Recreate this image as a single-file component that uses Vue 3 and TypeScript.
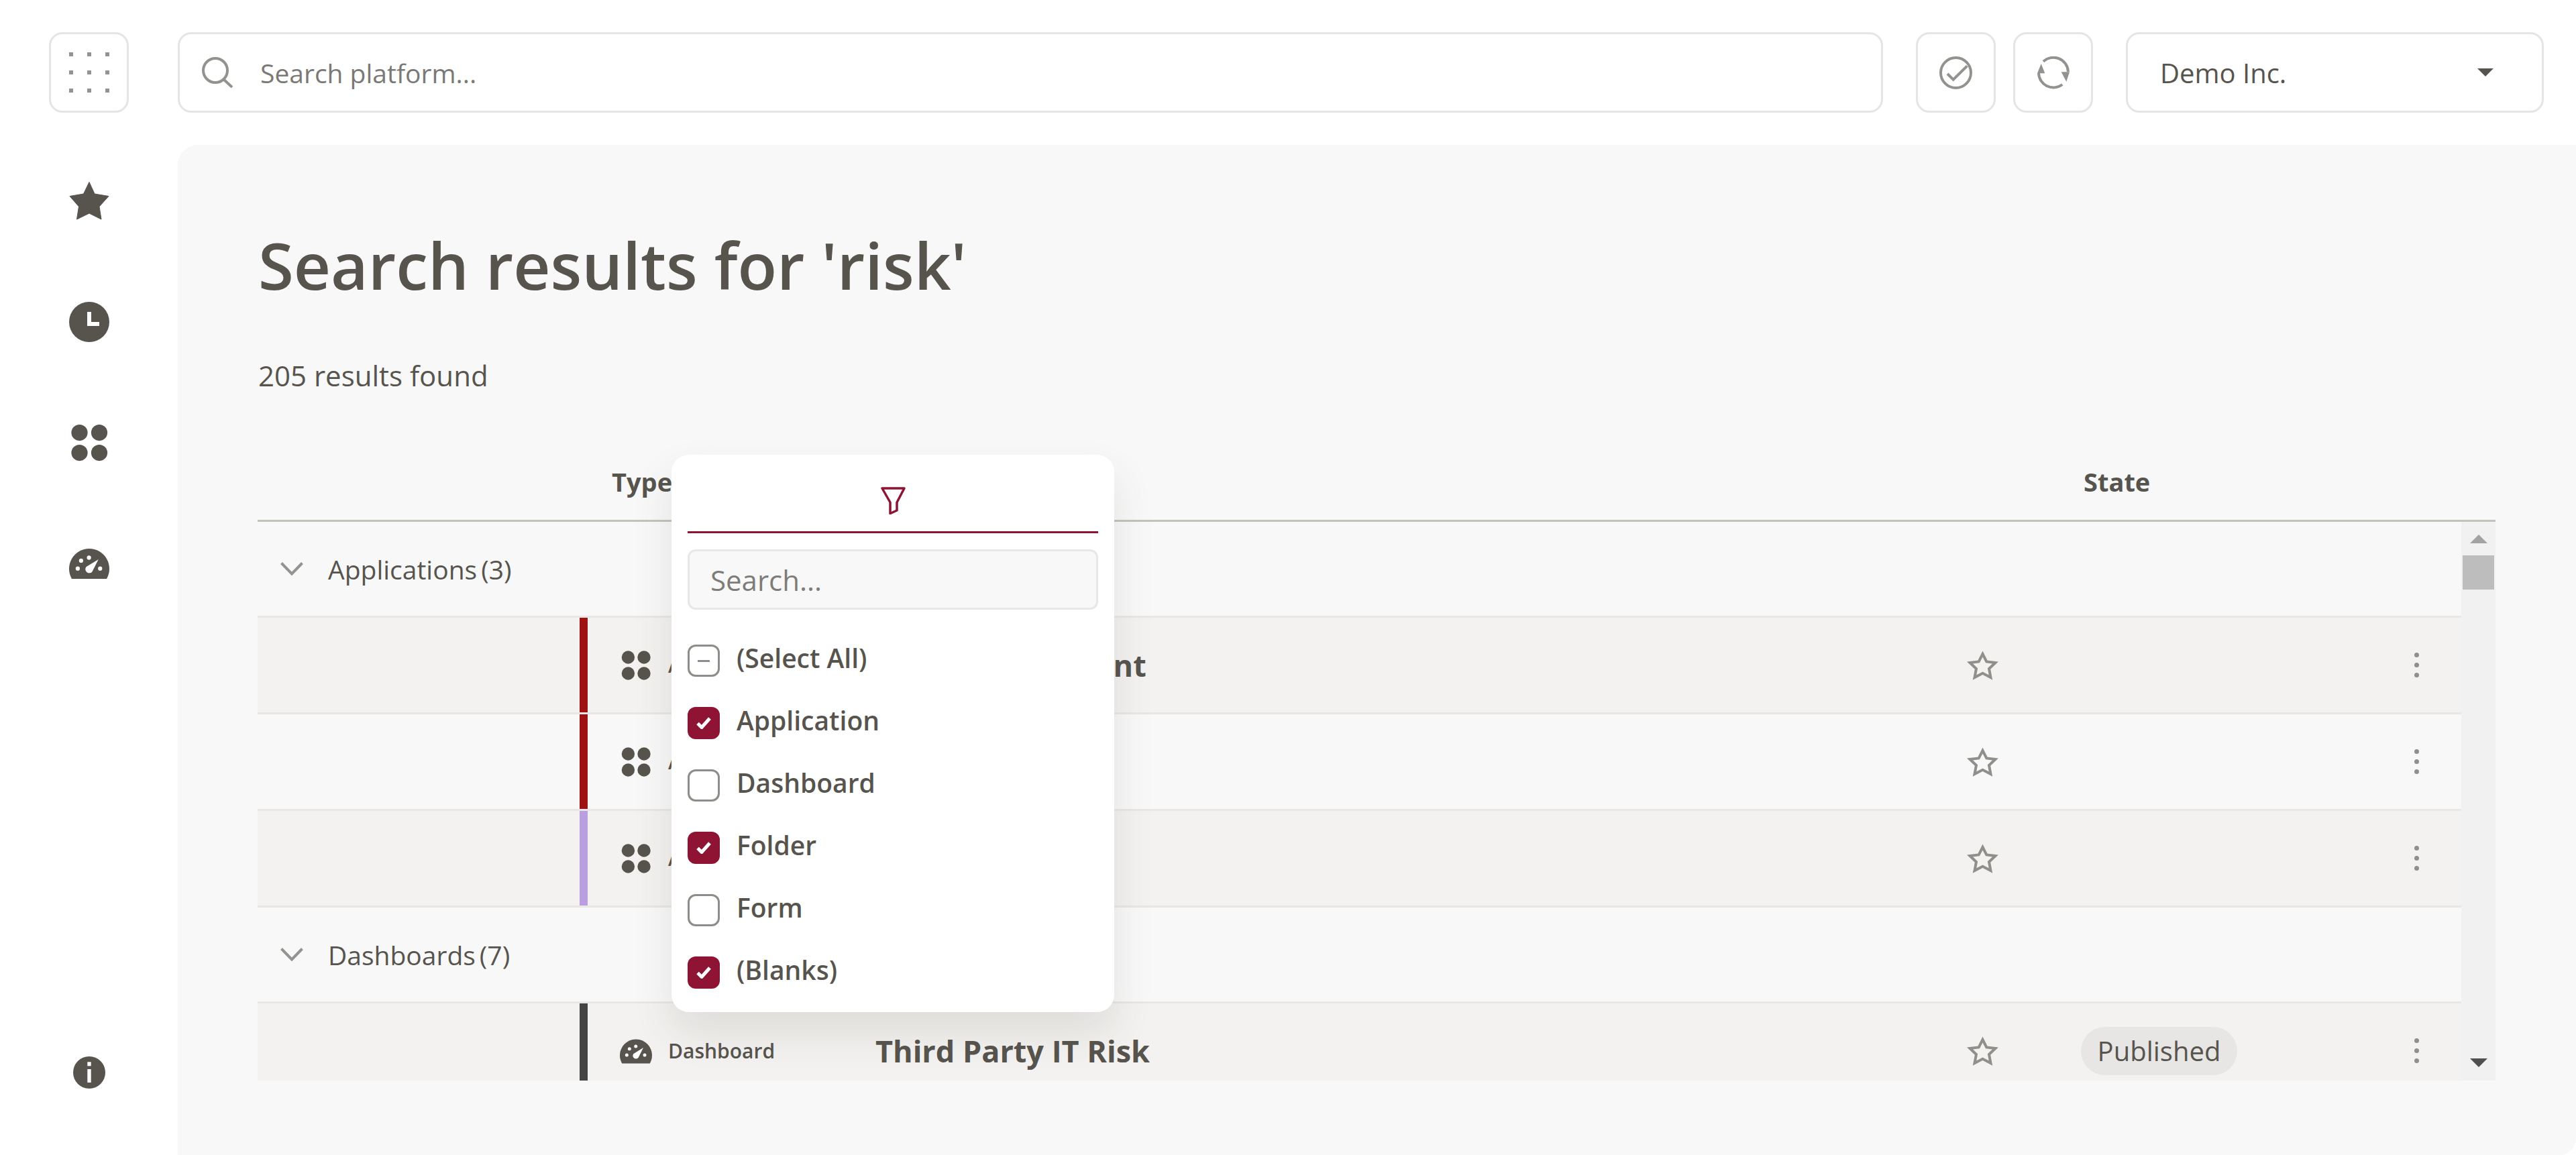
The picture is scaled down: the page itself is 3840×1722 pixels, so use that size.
<script setup lang="ts">
interface Row {
  color: string
  kind: 'app' | 'dash'
  type: string
  name: string
  state?: string
}
interface Group {
  label: string
  count: number
  rows: Row[]
}

const groups: Group[] = [
  {
    label: 'Applications',
    count: 3,
    rows: [
      { color: '#9f1214', kind: 'app', type: 'Application', name: 'Risk Management' },
      { color: '#9f1214', kind: 'app', type: 'Application', name: 'Risk Register' },
      { color: '#b99fe0', kind: 'app', type: 'Application', name: 'Risk Audit' },
    ],
  },
  {
    label: 'Dashboards',
    count: 7,
    rows: [
      { color: '#444444', kind: 'dash', type: 'Dashboard', name: 'Third Party IT Risk', state: 'Published' },
    ],
  },
]

const filters = [
  { label: '(Select All)', state: 'mixed' },
  { label: 'Application', state: 'on' },
  { label: 'Dashboard', state: 'off' },
  { label: 'Folder', state: 'on' },
  { label: 'Form', state: 'off' },
  { label: '(Blanks)', state: 'on' },
]
</script>

<template>
  <div class="app">
    <nav class="rail">
      <button class="tile">
        <svg width="60" height="60" viewBox="0 0 60 60" fill="#949390">
          <rect x="0" y="0" width="6" height="6" /><rect x="27" y="0" width="6" height="6" /><rect x="54" y="0" width="6" height="6" />
          <rect x="0" y="27" width="6" height="6" /><rect x="27" y="27" width="6" height="6" /><rect x="54" y="27" width="6" height="6" />
          <rect x="0" y="54" width="6" height="6" /><rect x="27" y="54" width="6" height="6" /><rect x="54" y="54" width="6" height="6" />
        </svg>
      </button>
      <div class="rail-icons">
        <svg width="60" height="60" viewBox="0 0 60 60" fill="#57544e">
          <path d="M30 1.5 38 19 59 22.5 45 38 48 57 30 48 11.5 57 14.5 38 1 22.5 21.5 19Z" stroke="#57544e" stroke-width="1" stroke-linejoin="round" />
        </svg>
        <svg width="60" height="60" viewBox="0 0 60 60">
          <circle cx="30" cy="30" r="30" fill="#57544e" />
          <path d="M27 15H33V30H45V36H27Z" fill="#fff" />
        </svg>
        <svg width="60" height="60" viewBox="0 0 48 48" fill="#57544e">
          <circle cx="12.4" cy="12" r="9.7" /><circle cx="36" cy="12" r="9.7" />
          <circle cx="12.4" cy="36" r="9.7" /><circle cx="36" cy="36" r="9.7" />
        </svg>
        <svg width="60" height="60" viewBox="0 -6.4 48 48">
          <path d="M3.2 36A24 24 0 1 1 44.8 36Z" fill="#57544e" />
          <g fill="#fff">
            <circle cx="14.3" cy="14.3" r="2.5" /><circle cx="23.7" cy="10.7" r="2.5" />
            <circle cx="10.3" cy="23.7" r="2.5" /><circle cx="37" cy="23.7" r="2.5" />
            <path d="M35 12.7 27.5 27.5A4.6 4.6 0 1 1 20.5 21.5Z" />
          </g>
        </svg>
      </div>
      <svg class="info" width="48" height="48" viewBox="0 0 48 48">
        <circle cx="24" cy="24" r="24" fill="#57544e" />
        <rect x="21.3" y="8.3" width="5.4" height="6" fill="#fff" />
        <rect x="21.3" y="19" width="5.4" height="20" fill="#fff" />
      </svg>
    </nav>

    <div class="main">
      <header class="topbar">
        <label class="search-box">
          <svg width="46" height="46" viewBox="0 0 46 46" fill="none" stroke="#93928e" stroke-width="4">
            <circle cx="20" cy="20" r="18" />
            <path d="M32 33 45 45" />
          </svg>
          <span class="search-text">Search platform...</span>
        </label>
        <div class="top-actions">
          <button class="tile">
            <svg width="49" height="49" viewBox="0 0 49 49" fill="none" stroke="#93928e">
              <circle cx="24.5" cy="24.5" r="22.5" stroke-width="4" />
              <path d="M12 26 20.7 34.7 41.3 14.3" stroke-width="4" />
            </svg>
          </button>
          <button class="tile">
            <svg width="48" height="49" viewBox="0 0 48 49" fill="none" stroke="#93928e" stroke-width="4">
              <path d="M9 7.7A22 22 0 0 1 46 23" />
              <path d="M37.3 42A22 22 0 0 1 2 25" />
              <path d="M5.7 11 0 25.3H11.3Z" fill="#93928e" stroke="none" />
              <path d="M43.3 37.7 35.7 23.3H48Z" fill="#93928e" stroke="none" />
            </svg>
          </button>
        </div>
        <div class="org-select">
          <span>Demo Inc.</span>
          <i class="caret"></i>
        </div>
      </header>

      <section class="panel">
        <h1 class="title">Search results for 'risk'</h1>
        <p class="count">205 results found</p>

        <div class="table">
          <div class="thead grid">
            <span></span>
            <span></span>
            <span class="th th-type">Type</span>
            <span></span>
            <span></span>
            <span class="th th-state">State</span>
          </div>
          <div class="tbody">
            <div class="rows">
              <template v-for="group in groups" :key="group.label">
                <div class="group-row">
                  <svg width="34" height="20" viewBox="0 0 34 20" fill="none" stroke="#949390" stroke-width="4">
                    <path d="M1.5 1.5 17 17.5 32.5 1.5" />
                  </svg>
                  <span class="group-label">{{ group.label }}<span class="group-count">({{ group.count }})</span></span>
                </div>
                <div v-for="row in group.rows" :key="row.name" class="row grid">
                  <span></span>
                  <span class="bar" :style="{ background: row.color }"></span>
                  <span class="type">
                    <svg v-if="row.kind === 'app'" width="48" height="48" viewBox="0 0 48 48" fill="#57544e">
                      <circle cx="12.4" cy="12" r="9.7" /><circle cx="36" cy="12" r="9.7" />
                      <circle cx="12.4" cy="36" r="9.7" /><circle cx="36" cy="36" r="9.7" />
                    </svg>
                    <svg v-else width="48" height="48" viewBox="0 -6.4 48 48">
                      <path d="M3.2 36A24 24 0 1 1 44.8 36Z" fill="#57544e" />
                      <g fill="#fff">
                        <circle cx="14.3" cy="14.3" r="2.5" /><circle cx="23.7" cy="10.7" r="2.5" />
                        <circle cx="10.3" cy="23.7" r="2.5" /><circle cx="37" cy="23.7" r="2.5" />
                        <path d="M35 12.7 27.5 27.5A4.6 4.6 0 1 1 20.5 21.5Z" />
                      </g>
                    </svg>
                    <span class="type-label">{{ row.type }}</span>
                  </span>
                  <span class="name">{{ row.name }}</span>
                  <span class="fav">
                    <svg width="47" height="44" viewBox="0 0 47 44" fill="none" stroke="#908f8b" stroke-width="4" stroke-miterlimit="8">
                      <path d="M23.5 5 29.3 16.5 42.5 18 33 27 35.5 40 23.5 33.8 11.5 40 14 27 4.5 18 17.7 16.5Z" />
                    </svg>
                  </span>
                  <span class="state"><span v-if="row.state" class="pill">{{ row.state }}</span></span>
                  <span class="more"><i></i><i></i><i></i></span>
                </div>
              </template>
            </div>
            <div class="scrollbar">
              <i class="arrow up"></i>
              <i class="thumb"></i>
              <i class="arrow down"></i>
            </div>
          </div>
        </div>

        <div class="popup">
          <div class="popup-tab">
            <svg width="37" height="41" viewBox="0 0 37 41" fill="none" stroke="#8f1434" stroke-width="3.5" stroke-linejoin="round">
              <path d="M2 2H35L24 23V35L14 39.5V23Z" />
            </svg>
          </div>
          <div class="popup-search">Search...</div>
          <ul class="filter-list">
            <li v-for="f in filters" :key="f.label" class="filter-item">
              <span class="box" :class="f.state">
                <svg v-if="f.state === 'on'" width="22" height="18" viewBox="0 0 22 18" fill="none" stroke="#fff" stroke-width="5">
                  <path d="M2 9.5 8 15.5 20 2" />
                </svg>
                <i v-else-if="f.state === 'mixed'" class="dash"></i>
              </span>
              <span class="filter-label">{{ f.label }}</span>
            </li>
          </ul>
        </div>
      </section>
    </div>
  </div>
</template>

<style>
html, body { margin: 0; padding: 0; background: #fff; }
</style>

<style scoped>
.app {
  width: 3840px;
  height: 1722px;
  display: flex;
  overflow: hidden;
  background: #fff;
  color: #57544e;
  font-family: "Open Sans", "Noto Sans", sans-serif;
}
.tile {
  box-sizing: border-box;
  width: 119px;
  height: 120px;
  padding: 0;
  display: flex;
  align-items: center;
  justify-content: center;
  background: #fff;
  border: 3px solid #e6e5e3;
  border-radius: 20px;
}
.rail {
  width: 265px;
  flex: none;
  padding: 48px 0 99px;
  box-sizing: border-box;
  display: flex;
  flex-direction: column;
  align-items: center;
}
.rail-icons {
  margin-top: 102px;
  display: flex;
  flex-direction: column;
  gap: 120px;
}
.info { margin-top: auto; }
.main {
  flex: 1;
  min-width: 0;
  display: flex;
  flex-direction: column;
}
.topbar {
  height: 216px;
  flex: none;
  box-sizing: border-box;
  padding: 48px 48px 48px 0;
  display: flex;
  gap: 49px;
}
.search-box {
  flex: 1;
  box-sizing: border-box;
  height: 120px;
  display: flex;
  align-items: center;
  gap: 41px;
  padding: 0 33px;
  border: 3px solid #e6e5e3;
  border-radius: 20px;
}
.search-text {
  font-size: 39px;
  color: #7a7976;
}
.top-actions { display: flex; gap: 26px; }
.org-select {
  box-sizing: border-box;
  width: 623px;
  height: 120px;
  display: flex;
  align-items: center;
  justify-content: space-between;
  padding: 0 72px 0 48px;
  border: 3px solid #e6e5e3;
  border-radius: 20px;
  font-size: 40px;
  font-weight: 500;
}
.caret {
  width: 0;
  height: 0;
  border-left: 12px solid transparent;
  border-right: 12px solid transparent;
  border-top: 12px solid #57544e;
}
.panel {
  position: relative;
  flex: 1;
  box-sizing: border-box;
  padding-left: 120px;
  background: #f8f8f8;
  border-radius: 30px 0 24px 0;
}
.title {
  margin: 114px 0 0;
  font-size: 96px;
  line-height: 130px;
  font-weight: 600;
}
.count {
  margin: 70px 0 0;
  font-size: 42px;
  line-height: 60px;
}
.table {
  margin: 70px 0 0 -1px;
  width: 3336px;
  height: 951px;
  overflow: hidden;
}
.grid {
  display: grid;
  grid-template-columns: 480px 12px 429px 1fr 95px 557px 109px;
  align-items: center;
}
.thead {
  box-sizing: border-box;
  height: 118px;
  border-bottom: 3px solid #c2c3bb;
  grid-template-columns: 480px 12px 429px 1fr 95px 608px 109px;
}
.th {
  font-size: 38px;
  font-weight: 700;
}
.th-type { padding-left: 36px; }
.th-state { padding-left: 103px; }
.tbody { display: flex; height: 833px; }
.rows { flex: 1; min-width: 0; }
.scrollbar {
  width: 51px;
  flex: none;
  box-sizing: border-box;
  padding: 19px 0;
  background: #f1f1f1;
  display: flex;
  flex-direction: column;
  align-items: center;
}
.arrow {
  width: 0;
  height: 0;
  border-left: 13px solid transparent;
  border-right: 13px solid transparent;
}
.arrow.up { border-bottom: 13px solid #a3a3a3; }
.arrow.down { border-top: 13px solid #505050; margin-top: 699px; }
.thumb {
  width: 47px;
  height: 51px;
  margin-top: 18px;
  background: #bdbdbd;
}
.group-row {
  box-sizing: border-box;
  height: 143px;
  display: flex;
  align-items: center;
  padding-left: 34px;
  gap: 37px;
  border-bottom: 3px solid #e8e7e5;
}
.group-label { font-size: 39px; }
.group-count { margin-left: 6px; }
.row {
  box-sizing: border-box;
  height: 144px;
  border-bottom: 3px solid #e8e7e5;
  background: #f8f8f8;
  align-items: stretch;
}
.row > * { display: flex; align-items: center; }
.rows .row:nth-child(2), .rows .row:nth-child(4), .rows .row:nth-child(6) { background: #f3f2f0; }
.bar { align-self: stretch; }
.type {
  padding-left: 48px;
  gap: 24px;
}
.type-label {
  font-size: 30px;
  font-weight: 600;
}
.name {
  font-size: 45px;
  font-weight: 700;
  white-space: nowrap;
}
.fav { justify-content: center; }
.state { padding-left: 99px; }
.pill {
  box-sizing: border-box;
  height: 72px;
  width: 233px;
  display: flex;
  align-items: center;
  justify-content: center;
  background: #e7e6e4;
  border-radius: 36px;
  font-size: 40px;
}
.more {
  flex-direction: column;
  justify-content: center;
  align-items: flex-start !important;
  gap: 8px;
  padding-left: 39px;
}
.more i {
  width: 7px;
  height: 7px;
  background: #908f8b;
  border-radius: 50%;
}
.popup {
  position: absolute;
  left: 736px;
  top: 462px;
  width: 660px;
  height: 831px;
  box-sizing: border-box;
  padding: 0 24px;
  background: #fff;
  border-radius: 26px;
  box-shadow: 0 30px 60px rgba(70, 65, 55, 0.12);
}
.popup-tab {
  box-sizing: border-box;
  height: 117px;
  padding-top: 48px;
  display: flex;
  justify-content: center;
  align-items: flex-start;
  border-bottom: 3px solid #8f1434;
}
.popup-search {
  box-sizing: border-box;
  height: 90px;
  margin-top: 24px;
  display: flex;
  align-items: center;
  padding-left: 31px;
  background: #f8f8f8;
  border: 3px solid #e7e7e5;
  border-radius: 12px;
  font-size: 42px;
  color: #7d7c78;
}
.filter-list {
  list-style: none;
  margin: 52px 0 0;
  padding: 0;
  display: flex;
  flex-direction: column;
  gap: 45px;
}
.filter-item {
  display: flex;
  align-items: center;
  gap: 25px;
  height: 48px;
}
.box {
  box-sizing: border-box;
  width: 48px;
  height: 48px;
  flex: none;
  display: flex;
  align-items: center;
  justify-content: center;
  border: 3px solid #8e8d89;
  border-radius: 12px;
}
.box.on { background: #8f1434; border-color: #8f1434; }
.dash { width: 18px; height: 3px; background: #8e8d89; }
.filter-label {
  font-size: 39px;
  font-weight: 600;
  position: relative;
  top: -5px;
}
</style>
